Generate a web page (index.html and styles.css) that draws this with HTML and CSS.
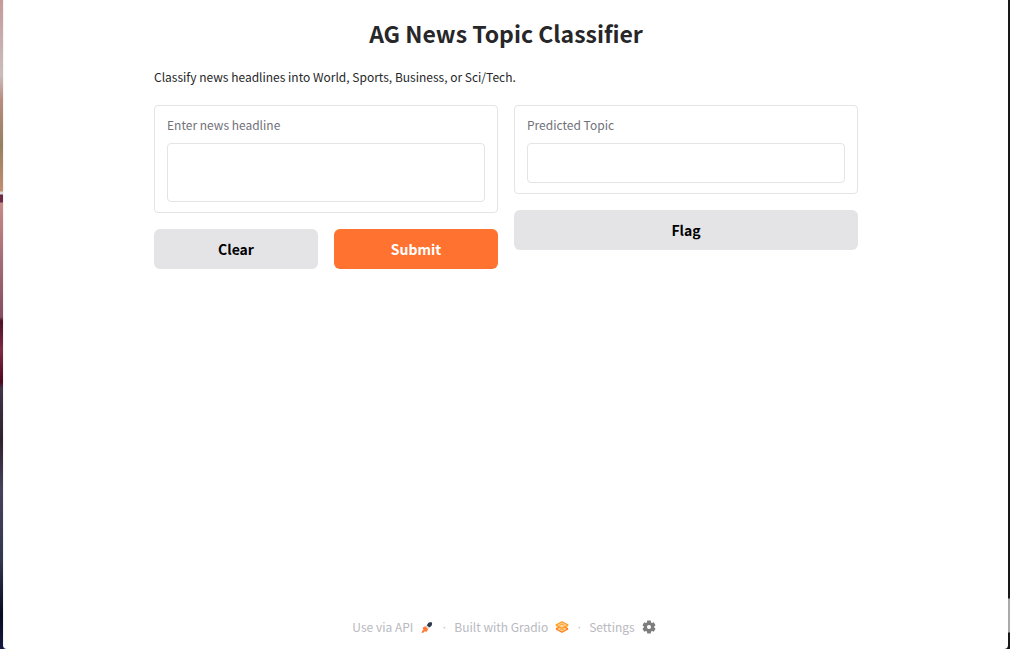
FILE: index.html
```html
<!DOCTYPE html>
<html lang="en">
<head>
<meta charset="utf-8">
<title>AG News Topic Classifier</title>
<link rel="stylesheet" href="styles.css">
</head>
<body>
<div class="desktop">
<div class="window">
  <main class="app">
    <h1 class="title">AG News Topic Classifier</h1>
    <p class="description">Classify news headlines into World, Sports, Business, or Sci/Tech.</p>
    <form class="columns">
      <div class="column">
        <div class="panel">
          <label class="label" for="headline">Enter news headline</label>
          <textarea class="field field-tall" id="headline"></textarea>
        </div>
        <div class="actions">
          <button class="button" type="reset">Clear</button>
          <button class="button button-primary" type="button">Submit</button>
        </div>
      </div>
      <div class="column">
        <div class="panel">
          <label class="label" for="topic">Predicted Topic</label>
          <input class="field" id="topic" type="text" readonly>
        </div>
        <button class="button" type="button">Flag</button>
      </div>
    </form>
  </main>
  <footer class="footer">
    <a class="footer-link" href="#api">Use via API
      <svg class="icon" viewBox="0 0 14 14" aria-hidden="true">
        <path fill="#2d3a50" d="M13.4 1 12 2.4C10.200 2 8.600 2.300 7.800 3.700L6.800 5.200 9.100 7.400 10.800 6.500C12 5.700 12.200 4 12 2.600z"/>
        <path fill="#ff7a35" d="M5.300 6.300 8.100 9 7 11.200 5.700 12.200 5.200 10.800 3.700 12.400 1.500 13 2.300 10.800 3.700 9.300 2.400 8.700 3.500 7.100z"/>
        <path fill="none" stroke="#a8b0bc" stroke-width=".7" d="m6 5.700 2.700 2.600"/>
      </svg>
    </a>
    <span class="dot">·</span>
    <a class="footer-link" href="#gradio">Built with Gradio
      <svg class="icon" viewBox="0 0 14 14" aria-hidden="true">
        <path fill="#ffd7a0" d="M7 1.500 1 4.700v4.600l6 3.200 6-3.200V4.700z"/>
        <path fill="none" stroke="#ff9a1f" stroke-width="1.300" stroke-linejoin="round" d="M1 5 7 1.800 13 5 7 8.200z"/>
        <path fill="none" stroke="#ff7c20" stroke-width="1.300" stroke-linejoin="round" d="M1 9 7 12.200 13 9M1 9 4 7.300M13 9 10 7.300"/>
        <path fill="none" stroke="#ffa32b" stroke-width="1" d="M4.500 5.200 7 4l2.500 1.200M4.500 8.800 7 10l2.500-1.200"/>
      </svg>
    </a>
    <span class="dot">·</span>
    <a class="footer-link" href="#settings">Settings
      <svg class="icon" viewBox="0 0 24 24" aria-hidden="true">
        <path fill="#7d7d7d" fill-rule="evenodd" d="m9 1-.5 3.1-1.8 1L3.800 4 .8 9.200l2.400 1.900v1.800L.8 14.800l3 5.200 2.900-1.100 1.800 1L9 23h6l.5-3.100 1.800-1 2.900 1.100 3-5.200-2.400-1.900v-1.800l2.400-1.900-3-5.200-2.900 1.100-1.800-1L15 1zm3 7.500a3.500 3.500 0 1 1 0 7 3.500 3.500 0 0 1 0-7z"/>
      </svg>
    </a>
  </footer>
</div>
</div>
</body>
</html>
```
FILE: styles.css
```css
* {
  box-sizing: border-box;
}

body {
  margin: 0;
  font-family: "Noto Sans CJK SC", "Noto Sans", sans-serif;
  font-size: 12px;
  line-height: 20px;
  color: #27272a;
}

/* Wallpaper visible around the window edges */
.desktop {
  min-height: 100vh;
  display: grid;
  padding: 0 2px 0 3px;
  background:
    linear-gradient(#17181a 0 598px, #aaa 599px 632px, #17181a 633px) right / 3px 100% no-repeat,
    linear-gradient(#c69a9a 0, #c9bdbd 75px, #b88c7e 100px, #96805f 145px, #c28e70 191px, #ddd 192px 194px, #6b2b46 195px 202px, #c58b89 203px, #874d61 317px, #4d1026 321px, #7d2c43 350px, #4d071f 382px, #413448 388px, #302130 440px, #45435b 490px, #34364f 560px, #080b24 615px, #151a42 649px);
}

.window {
  display: flex;
  flex-direction: column;
  background: #fff;
  border-left: 1px solid #f4f4f5;
  border-radius: 0 0 4px 4px;
}

.app {
  flex: 1;
  width: 100%;
  max-width: 704px;
  margin: 0 auto;
  padding-top: 15px;
}

.title {
  margin: 0 0 16px;
  font-size: 23px;
  line-height: 36px;
  font-weight: 700;
  text-align: center;
}

.description {
  margin: 0 0 18px;
}

.columns {
  display: flex;
  align-items: flex-start;
  gap: 16px;
}

.column {
  flex: 1;
  display: flex;
  flex-direction: column;
  gap: 16px;
}

.panel {
  display: flex;
  flex-direction: column;
  gap: 8px;
  padding: 9px 12px 10px;
  border: 1px solid #e4e4e7;
  border-radius: 4px;
}

.label {
  color: #71717a;
}

.field {
  width: 100%;
  height: 40px;
  padding: 8px;
  border: 1px solid #e4e4e7;
  border-radius: 4px;
  background: #fff;
  font: inherit;
  resize: none;
}

.field-tall {
  height: 59px;
}

.actions {
  display: flex;
  gap: 16px;
}

.actions .button {
  flex: 1;
}

.button {
  height: 40px;
  padding: 0 16px;
  border: 0;
  border-radius: 6px;
  background: #e4e4e7;
  color: #000;
  font-family: inherit;
  font-size: 14px;
  font-weight: 700;
}

.button-primary {
  background: #ff7230;
  color: #fff;
}

.footer {
  display: flex;
  justify-content: center;
  align-items: center;
  gap: 8px;
  padding: 0 4px 12px 0;
  color: #b9b9c0;
}

.footer-link {
  display: flex;
  align-items: center;
  gap: 7px;
  color: inherit;
  text-decoration: none;
}

.dot {
  font-family: "Liberation Sans", sans-serif;
}

.icon {
  width: 14px;
  height: 14px;
}
```
